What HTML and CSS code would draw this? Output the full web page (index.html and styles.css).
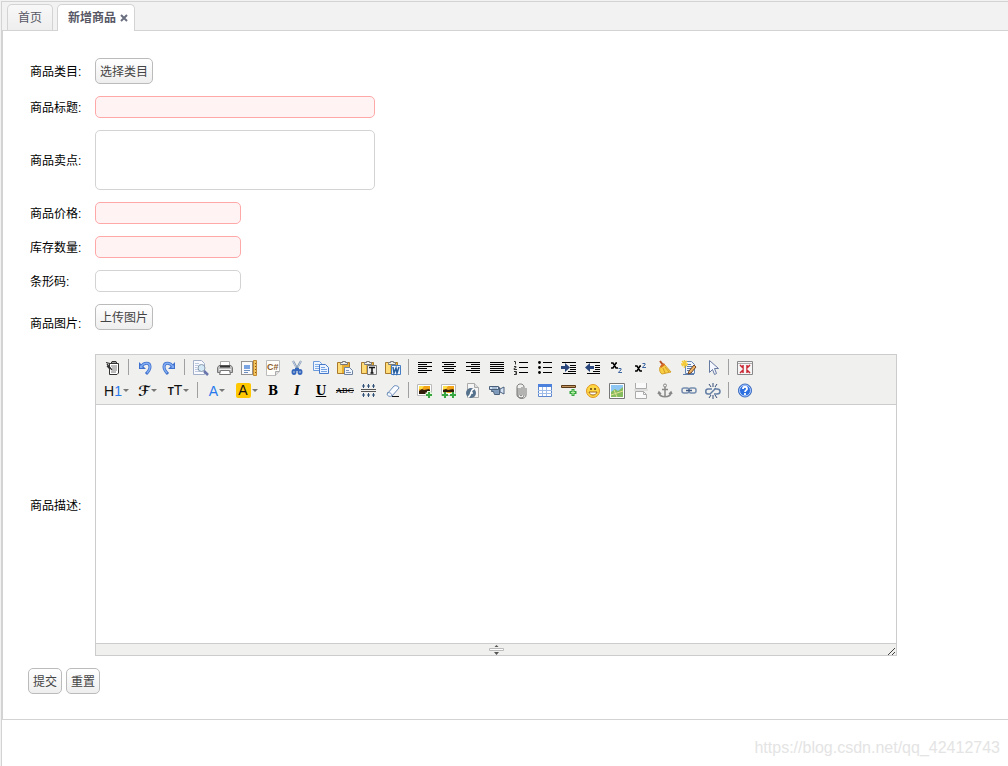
FILE: index.html
```html
<!DOCTYPE html>
<html lang="zh-CN">
<head>
<meta charset="utf-8">
<meta name="viewport" content="width=device-width, initial-scale=1">
<title>新增商品</title>
<link rel="stylesheet" href="styles.css">
</head>
<body>
<div class="app">
  <nav class="tabs" aria-label="标签页">
    <a class="tab" href="#home">首页</a>
    <div class="tab tab-active"><a href="#add">新增商品</a><button class="tab-close" type="button" aria-label="关闭"><svg width="8" height="8" viewBox="0 0 8 8"><path d="M1 1l6 6M7 1L1 7" stroke="#6b7080" stroke-width="2"/></svg></button></div>
  </nav>
  <main class="panel">
    <form class="form">
      <span class="label">商品类目:</span>
      <div><button class="btn" type="button">选择类目</button></div>
      <label class="label" for="title">商品标题:</label>
      <input class="field field-long field-invalid" id="title" type="text">
      <label class="label" for="point">商品卖点:</label>
      <textarea class="field field-long field-area" id="point"></textarea>
      <label class="label" for="price">商品价格:</label>
      <input class="field field-invalid" id="price" type="text">
      <label class="label" for="num">库存数量:</label>
      <input class="field field-invalid" id="num" type="text">
      <label class="label" for="code">条形码:</label>
      <input class="field" id="code" type="text">
      <span class="label">商品图片:</span>
      <div class="upload"><button class="btn" type="button">上传图片</button></div>
      <label class="label" for="desc">商品描述:</label>
      <div class="editor">
        <div class="toolbar">
          <div class="tools">
            <button class="tool" type="button" aria-label="HTML代码"><svg viewBox="0 0 16 16"><path d="M4.500 3.500h9v9.500l-1.500 1.500h-7.500z" fill="#fff" stroke="#333"/><path d="M7 1.500h4l1 2H6z" fill="#999" stroke="#333"/><path d="M1 2.500l4 1M2 4l5 6M2 6l3 3" stroke="#333" stroke-width="1.200"/><path d="M6 6h6M7 8h5M7 10h5M6 12h5" stroke="#777"/></svg></button>
            <span class="sep"></span>
            <button class="tool" type="button" aria-label="后退"><svg viewBox="0 0 16 16"><path d="M4 7c3-5 9-5 9 0 0 3-2 5-4 7" fill="none" stroke="#3f70cd" stroke-width="3"/><path d="M2 2v7h7z" fill="#3f70cd"/><path d="M4 7c3-5 9-5 9 0 0 3-2 5-3 6" fill="none" stroke="#82adf2" stroke-width="1.500"/><path d="M3 5v3h3z" fill="#82adf2"/></svg></button>
            <button class="tool" type="button" aria-label="前进"><svg viewBox="0 0 16 16"><path d="M12 7C9 2 3 2 3 7c0 3 2 5 4 7" fill="none" stroke="#3f70cd" stroke-width="3"/><path d="M14 2v7H7z" fill="#3f70cd"/><path d="M12 7C9 2 3 2 3 7c0 3 2 5 3 6" fill="none" stroke="#82adf2" stroke-width="1.500"/><path d="M13 5v3h-3z" fill="#82adf2"/></svg></button>
            <span class="sep"></span>
            <button class="tool" type="button" aria-label="预览"><svg viewBox="0 0 16 16"><path d="M.5.5h8l3 3v11H.5z" fill="#f8faff" stroke="#a3afc9"/><path d="M2 3.500h4M2 5.500h3M2 7.500h2M2 9.500h3M2 11.500h5" stroke="#bcc8df"/><circle cx="8.500" cy="8" r="3.500" fill="#d3e9f5" stroke="#8798ab"/><path d="M11 11l4 4" stroke="#6874ac" stroke-width="2.500"/></svg></button>
            <button class="tool" type="button" aria-label="打印"><svg viewBox="0 0 16 16"><path d="M3.500 6v-4.500h9v4.500" fill="#fff" stroke="#aaa"/><path d="M2 5.500h12l1.500 2v5H.5v-5z" fill="#bbb" stroke="#777"/><path d="M3 6.500h10" stroke="#333" stroke-width="2"/><path d="M2 9.500h12" stroke="#eee"/><path d="M3.500 10.500h9l1 4h-11z" fill="#fff" stroke="#777"/></svg></button>
            <button class="tool" type="button" aria-label="模板"><svg viewBox="0 0 16 16"><path d="M.5 1.500h11v13H.5z" fill="#fafafa" stroke="#333" stroke-dasharray="1 1"/><path d="M3 5h6v4H3z" fill="#7ba4e2"/><path d="M3 10.500h6M3 12.500h4" stroke="#6e8fbe"/><path d="M12.500.5h3v15h-3z" fill="#f3c75e" stroke="#c28932"/><path d="M14 3.500h1M14 6.500h1M14 9.500h1M14 12.500h1" stroke="#8f5515"/></svg></button>
            <button class="tool" type="button" aria-label="插入程序代码"><svg viewBox="0 0 16 16"><path d="M1.500.5h13v11l-4 4h-9z" fill="#fffefa" stroke="#bbb"/><path d="M10.500 15.500v-4h4" fill="#ddd" stroke="#aaa"/><text x="2" y="10" class="code-mark">C#</text></svg></button>
            <button class="tool" type="button" aria-label="剪切"><svg viewBox="0 0 16 16"><path d="M4 1l5 9M12 1l-5 9" stroke="#7890b0" stroke-width="2"/><path d="M4 1l3 6M12 1L9 7" stroke="#c8d4e2"/><ellipse cx="5" cy="12" rx="1.500" ry="2" fill="none" stroke="#3568bd" stroke-width="2"/><ellipse cx="11" cy="12" rx="1.500" ry="2" fill="none" stroke="#3568bd" stroke-width="2"/><path d="M6 8h4v3H6z" fill="#3568bd"/></svg></button>
            <button class="tool" type="button" aria-label="复制"><svg viewBox="0 0 16 16"><path d="M.5 1.500h6l2 2v7h-8z" fill="#eef5ff" stroke="#6c9add"/><path d="M2 4.500h4M2 6.500h4M2 8.500h4" stroke="#82aee9"/><path d="M6.500 4.500h6l3 3v6h-9z" fill="#eaf3ff" stroke="#4679c9"/><path d="M8 7.500h4M8 9.500h6M8 11.500h6" stroke="#75a2e5"/></svg></button>
            <button class="tool" type="button" aria-label="粘贴"><svg viewBox="0 0 16 16"><path d="M.5 2.500h12v11h-12z" fill="#e9ae31" stroke="#a9792d"/><path d="M1 3h4v10H1z" fill="#ffdc77"/><path d="M3.500 3.500v-1h2v-1h3v1h2v2h-7z" fill="#eee" stroke="#777"/><path d="M7.500 7.500h5l3 3v4h-8z" fill="#eef5ff" stroke="#71849f"/><path d="M9 10.500h3M9 12.500h5" stroke="#7e95b8"/></svg></button>
            <button class="tool" type="button" aria-label="粘贴为无格式文本"><svg viewBox="0 0 16 16"><path d="M.5 2.500h12v11h-12z" fill="#e9ae31" stroke="#a9792d"/><path d="M1 3h4v10H1z" fill="#ffdc77"/><path d="M3.500 3.500v-1h2v-1h3v1h2v2h-7z" fill="#eee" stroke="#777"/><path d="M6.500 5.500h9v9h-9z" fill="#eee" stroke="#777"/><path d="M8 7.500h6M11 7v6M9.500 13h3" stroke="#111" stroke-width="1.500"/></svg></button>
            <button class="tool" type="button" aria-label="从Word粘贴"><svg viewBox="0 0 16 16"><path d="M.5 2.500h12v11h-12z" fill="#e9ae31" stroke="#a9792d"/><path d="M1 3h4v10H1z" fill="#ffdc77"/><path d="M3.500 3.500v-1h2v-1h3v1h2v2h-7z" fill="#eee" stroke="#777"/><path d="M6.500 5.500h9v9h-9z" fill="#e9f2ff" stroke="#457dc4"/><path d="M8 7l1 6 2-5 1 5 2-6" fill="none" stroke="#285d9e" stroke-width="1.500"/></svg></button>
            <span class="sep"></span>
            <button class="tool" type="button" aria-label="左对齐"><svg viewBox="0 0 16 16"><path d="M1 2.500h14M1 4.500h9M1 6.500h14M1 8.500h9M1 10.500h14M1 12.500h9" stroke="#000"/></svg></button>
            <button class="tool" type="button" aria-label="居中"><svg viewBox="0 0 16 16"><path d="M1 2.500h14M3 4.500h10M1 6.500h14M3 8.500h10M1 10.500h14M3 12.500h10" stroke="#000"/></svg></button>
            <button class="tool" type="button" aria-label="右对齐"><svg viewBox="0 0 16 16"><path d="M1 2.500h14M6 4.500h9M1 6.500h14M6 8.500h9M1 10.500h14M6 12.500h9" stroke="#000"/></svg></button>
            <button class="tool" type="button" aria-label="两端对齐"><svg viewBox="0 0 16 16"><path d="M1 2.500h14M1 4.500h14M1 6.500h14M1 8.500h14M1 10.500h14M1 12.500h14" stroke="#000"/></svg></button>
            <button class="tool" type="button" aria-label="编号"><svg viewBox="0 0 16 16"><path d="M6 2.500h9M6 7.500h9M6 12.500h9" stroke="#000"/><path d="M1 1.500h1.500v3M1 6.500h2v1l-2 1v1h3M1 11.500h2.500v3H1M2 13h1" fill="none" stroke="#333"/></svg></button>
            <button class="tool" type="button" aria-label="项目符号"><svg viewBox="0 0 16 16"><path d="M6 2.500h9M6 7.500h9M6 12.500h9" stroke="#000"/><circle cx="2.500" cy="2.500" r="1.400"/><circle cx="2.500" cy="7.500" r="1.400"/><circle cx="2.500" cy="12.500" r="1.400"/></svg></button>
            <button class="tool" type="button" aria-label="增加缩进"><svg viewBox="0 0 16 16"><path d="M1 2.500h14M9 5.500h6M9 7.500h6M9 9.500h6M7 11.500h8M2 13.500h13" stroke="#000"/><path d="M0 6h4V3l5 4.500L4 12V9H0z" fill="#29467d"/></svg></button>
            <button class="tool" type="button" aria-label="减少缩进"><svg viewBox="0 0 16 16"><path d="M1 2.500h14M10 5.500h5M10 7.500h5M10 9.500h5M8 11.500h7M2 13.500h13" stroke="#000"/><path d="M9 6H5V3L0 7.500 5 12V9h4z" fill="#29467d"/></svg></button>
            <button class="tool" type="button" aria-label="下标"><svg viewBox="0 0 16 16"><path d="M2 3h2l3 5h2M8 3H7L4 8H2" fill="none" stroke="#000" stroke-width="1.500"/><path d="M9.500 8.500h2.500v1.500l-2.500 2v.5H13" fill="none" stroke="#3c65a1"/></svg></button>
            <button class="tool" type="button" aria-label="上标"><svg viewBox="0 0 16 16"><path d="M2 6h2l3 5h2M8 6H7l-3 5H2" fill="none" stroke="#000" stroke-width="1.500"/><path d="M9.500 3.500h2.500V5L9.500 7v.5H13" fill="none" stroke="#3c65a1"/></svg></button>
            <button class="tool" type="button" aria-label="清理HTML代码"><svg viewBox="0 0 16 16"><path d="M3 1l3 4" stroke="#b75124" stroke-width="2"/><path d="M3 7l4-3 7 8-9 2c-2-1-3-4-2-7z" fill="#f8cf42" stroke="#d4a12d"/><path d="M3 6l4-3 1 2-4 3z" fill="#d66b25"/><path d="M6 8l2 5M8 7l4 5" stroke="#d39a26"/></svg></button>
            <button class="tool" type="button" aria-label="一键排版"><svg viewBox="0 0 16 16"><path d="M4.500 1.500h6l3 3v9h-9z" fill="#eef5ff" stroke="#6585b7"/><path d="M6 4.500h4M6 6.500h6M6 8.500h6M6 10.500h5M2 14.500h11" stroke="#5b7cad"/><path d="M3.500 0v8M0 4h7M1 1l5 5M6 1L1 6" stroke="#f6cb39" stroke-width="1.500"/><path d="M15 7l-5 6-3 1 1-3 5-6z" fill="#eeb464" stroke="#714628"/></svg></button>
            <button class="tool" type="button" aria-label="全选"><svg viewBox="0 0 16 16"><path d="M4.500.5v12l3-3 2 5 2-1-2-5h4z" fill="#f5f8ff" stroke="#6679a0"/></svg></button>
            <span class="sep"></span>
            <button class="tool" type="button" aria-label="全屏显示"><svg viewBox="0 0 16 16"><path d="M.5 1.500h15v13H.5z" fill="#f6f6f6" stroke="#888"/><path d="M1 3.500h14" stroke="#aaa"/><path d="M3 5l3 3V5M13 5l-3 3V5M3 13l3-3v3M13 13l-3-3v3" fill="none" stroke="#c92833" stroke-width="1.500"/></svg></button>
          </div>
          <div class="tools">
            <button class="tool tool-menu" type="button" aria-label="段落"><span>H<b class="blue">1</b></span><i class="caret"></i></button>
            <button class="tool tool-menu" type="button" aria-label="字体"><span class="script">ℱ</span><i class="caret"></i></button>
            <button class="tool tool-menu" type="button" aria-label="文字大小"><span><small>T</small>T</span><i class="caret"></i></button>
            <span class="sep"></span>
            <div class="colors">
              <button class="tool tool-menu" type="button" aria-label="文字颜色"><span class="blue">A</span><i class="caret"></i></button>
              <button class="tool tool-menu" type="button" aria-label="文字背景"><span class="highlight">A</span><i class="caret"></i></button>
            </div>
            <button class="tool tool-serif" type="button" aria-label="粗体">B</button>
            <button class="tool tool-serif italic" type="button" aria-label="斜体">I</button>
            <button class="tool tool-serif underline" type="button" aria-label="下划线">U</button>
            <button class="tool strike" type="button" aria-label="删除线">ABC</button>
            <button class="tool" type="button" aria-label="行距"><svg viewBox="0 0 16 16"><path d="M0 6.500h15M0 8.500h15" stroke="#555"/><path d="M2.500 1v4M7.500 1v4M12.500 1v4M2.500 10v4M7.500 10v4M12.500 10v4M1 3h3M6 3h3M11 3h3M1 12h3M6 12h3M11 12h3" stroke="#315078"/></svg></button>
            <button class="tool" type="button" aria-label="删除格式"><svg viewBox="0 0 16 16"><path d="M2 11l7-8c1-1 5 0 5 2l-7 8c-2 1-5 0-5-2z" fill="#f8fbff" stroke="#6c8db8"/><path d="M2 10c2-1 5 0 5 3" fill="none" stroke="#6c8db8"/><path d="M7 13.500h7" stroke="#111"/></svg></button>
            <span class="sep"></span>
            <button class="tool" type="button" aria-label="图片"><svg viewBox="0 0 16 16"><path d="M.5 1.500h14v11H.5z" fill="#fff" stroke="#bbb"/><path d="M2 3h11v8H2z" fill="#f3a416"/><path d="M2 3h5l-2 3H2z" fill="#ffe14e"/><path d="M2 8l3-2 2 1 5-1 1 1v4H2z" fill="#301d09"/><path d="M12 8v7M8.500 11.500h7" stroke="#e6f6df" stroke-width="4"/><path d="M12 9v6M9 12h6" stroke="#37a641" stroke-width="2"/></svg></button>
            <button class="tool" type="button" aria-label="批量图片上传"><svg viewBox="0 0 16 16"><path d="M.5 1.500h14v11H.5z" fill="#fff" stroke="#bbb"/><path d="M2 3h11v7H2z" fill="#f3a416"/><path d="M2 3h5l-2 3H2z" fill="#ffe14e"/><path d="M2 7l3-1 2 1 5-1 1 1v2H2z" fill="#301d09"/><path d="M4 9v6M12 9v6M1 12h6M9 12h6" stroke="#e6f6df" stroke-width="3"/><path d="M4 9v6M1 12h6M12 9v6M9 12h6" stroke="#37a641" stroke-width="2"/></svg></button>
            <button class="tool" type="button" aria-label="Flash"><svg viewBox="0 0 16 16"><path d="M2.500.5h7l4 4v10h-11z" fill="#f5f5f5" stroke="#aaa"/><path d="M9.500.5v4h4" fill="#ddd" stroke="#aaa"/><circle cx="6" cy="10" r="5" fill="#56718c"/><path d="M9 6c-4 0-2 7-6 8M5 10h3" fill="none" stroke="#fff" stroke-width="1.500"/></svg></button>
            <button class="tool" type="button" aria-label="视音频"><svg viewBox="0 0 16 16"><path d="M3.500 4.500h7v7h-5l-1-3h-2z" fill="#839dbd" stroke="#4a607b"/><path d="M.5 3.500h9v3h-9zM11 6l4-2v7l-4-2z" fill="#d7e4f5" stroke="#4a607b"/><path d="M3 5h5M5 9h4" stroke="#7895b5"/></svg></button>
            <button class="tool" type="button" aria-label="插入文件"><svg viewBox="0 0 16 16"><path d="M5 5v7c0 4 6 4 6 0V4c0-4-7-4-7 0v8c0 4 9 5 9 0V5M7 5v7c0 1 2 1 2 0V4" fill="none" stroke="#777"/></svg></button>
            <button class="tool" type="button" aria-label="表格"><svg viewBox="0 0 16 16"><path d="M1.500 1.500h13v12h-13z" fill="#fff" stroke="#5e87ce"/><path d="M1 1h14v3H1z" fill="#4b80dc"/><path d="M5.500 4v9M9.500 4v9M1 7.500h14M1 10.500h14" stroke="#9ebbe9"/></svg></button>
            <button class="tool" type="button" aria-label="插入横线"><svg viewBox="0 0 16 16"><path d="M.5 2.500h14v2H.5z" fill="#c49461" stroke="#5a3b19"/><path d="M12 6v7M8.500 9.500h7" stroke="#37a641" stroke-width="3"/><path d="M12 7v5M10 9.500h4" stroke="#b8f1a4"/></svg></button>
            <button class="tool" type="button" aria-label="插入表情"><svg viewBox="0 0 16 16"><circle cx="8" cy="8" r="6.500" fill="#ffd743" stroke="#e09620"/><path d="M6 5v2M10 5v2" stroke="#604014" stroke-width="1.500"/><path d="M4 9h8c-1 4-7 4-8 0z" fill="#fff" stroke="#a36618"/></svg></button>
            <button class="tool" type="button" aria-label="地图"><svg viewBox="0 0 16 16"><path d="M.5.5h15v15H.5z" fill="#fff" stroke="#777"/><path d="M2 2h12v12H2z" fill="#8ec7f4"/><path d="M2 9l4-3 3 2 5-4v10H2z" fill="#85bd5e"/><path d="M2 12l12-4M5 7l3 7" stroke="#e5df91"/></svg></button>
            <button class="tool" type="button" aria-label="分页符"><svg viewBox="0 0 16 16"><path d="M2.500 0v5.500h11V0M2.500 15.500v-7h8l3 3v4z" fill="#fafafa" stroke="#aaa"/><path d="M10.500 8.500v3h3" fill="none" stroke="#aaa"/><path d="M1 7h14" stroke="#ccc"/></svg></button>
            <button class="tool" type="button" aria-label="锚点"><svg viewBox="0 0 16 16"><circle cx="8" cy="2.500" r="1.500" fill="none" stroke="#888"/><path d="M8 4v10M5 6.500h6M2 10c1 5 11 5 12 0M1 11l1-2 2 2M15 11l-1-2-2 2" fill="none" stroke="#888" stroke-width="1.500"/></svg></button>
            <button class="tool" type="button" aria-label="超级链接"><svg viewBox="0 0 16 16"><rect x="1" y="5" width="7" height="5" rx="2" fill="none" stroke="#758daf" stroke-width="1.500"/><rect x="8" y="5" width="7" height="5" rx="2" fill="none" stroke="#758daf" stroke-width="1.500"/><path d="M5 7.500h6" stroke="#415b85" stroke-width="1.500"/></svg></button>
            <button class="tool" type="button" aria-label="取消超级链接"><svg viewBox="0 0 16 16"><path d="M7 6H3c-3 0-3 5 0 5h3M9 6h3c4 0 4 5 0 5H9M5 11l6-6" fill="none" stroke="#647fa6" stroke-width="1.500"/><path d="M8 0v4M4 1l2 3M12 1l-2 3M8 12v4M4 15l2-3M12 15l-2-3" stroke="#344d78"/></svg></button>
            <span class="sep"></span>
            <button class="tool" type="button" aria-label="关于"><svg viewBox="0 0 16 16"><circle cx="8" cy="7.500" r="6.500" fill="#2f70e0" stroke="#3868bd"/><circle cx="8" cy="7.500" r="5.500" fill="none" stroke="#b7d3ff"/><path d="M6 6c0-3 4-3 4 0 0 1-2 1.500-2 3M8 10v2" fill="none" stroke="#fff" stroke-width="1.800"/></svg></button>
          </div>
        </div>
        <textarea class="editor-area" id="desc"></textarea>
        <div class="statusbar">
          <svg class="grip" width="15" height="11" viewBox="0 0 15 11"><path d="M7.500 1l2 2h-4zM5 8h5l-2.500 3z" fill="#555"/><path d="M.5 4.500h14v2H.5z" fill="#fff" stroke="#bbb"/></svg>
          <svg class="corner" width="8" height="8" viewBox="0 0 8 8"><path d="M0 8l7-7M4 8l3-3" stroke="#444"/></svg>
        </div>
      </div>
    </form>
    <div class="actions">
      <button class="btn" type="button">提交</button>
      <button class="btn" type="button">重置</button>
    </div>
  </main>
  <footer class="footer">https://blog.csdn.net/qq_42412743</footer>
</div>
</body>
</html>
```
FILE: styles.css
```css
* { box-sizing: border-box; }
body {
  margin: 0;
  padding: 1px 0 0 1px;
  background: #f2f2f2;
  color: #000;
  font: 12px/16px "Liberation Sans", "Noto Sans CJK SC", sans-serif;
}
button, input, textarea { font: inherit; margin: 0; }
.app {
  min-height: calc(100vh - 1px);
  border: solid #d3d3d3;
  border-width: 1px 0 0 1px;
  background: #fff;
}
.tabs {
  display: flex;
  gap: 4px;
  height: 29px;
  padding: 2px 5px 0;
  border-bottom: 1px solid #d3d3d3;
  background: #f2f2f2;
}
.tab {
  height: 26px;
  padding: 4px 10px;
  border: 1px solid #d3d3d3;
  border-bottom: 0;
  border-radius: 5px 5px 0 0;
  background: linear-gradient(#f8f8f8, #eee);
  color: #575765;
  line-height: 18px;
  text-decoration: none;
}
.tab a { color: inherit; text-decoration: none; }
.tab-active {
  display: flex;
  align-items: center;
  gap: 4px;
  height: 27px;
  padding-right: 6px;
  background: #fff;
  font-weight: bold;
}
.tab-close {
  display: flex;
  padding: 0;
  border: 0;
  background: none;
}
.panel {
  padding: 27px 25px 25px;
  border: solid #d3d3d3;
  border-width: 0 0 1px 1px;
}
.form {
  display: grid;
  grid-template-columns: 53px minmax(0, 802px);
  gap: 12px;
  align-items: center;
  padding-left: 2px;
}
.label { padding-top: 2px; white-space: nowrap; }
.btn {
  height: 26px;
  padding: 2px 4px 0;
  border: 1px solid #bbb;
  border-radius: 5px;
  background: linear-gradient(#fff, #eee);
  color: #444;
  vertical-align: top;
}
.field {
  width: 146px;
  height: 22px;
  padding: 2px 4px;
  border: 1px solid #d3d3d3;
  border-radius: 5px;
  background: #fff;
  outline: none;
}
.field-long { width: 280px; }
.field-area { display: block; height: 60px; resize: none; }
.field-invalid { border-color: #ffa8a8; background: #fff3f3; }
.upload { height: 38px; }
.editor { border: 1px solid #ccc; background: #fff; }
.toolbar {
  padding: 1px 5px 2px;
  border-bottom: 1px solid #ccc;
  background: #f0f0ee;
}
.tools { display: flex; flex-wrap: wrap; min-height: 23px; }
.tool {
  display: flex;
  align-items: center;
  justify-content: center;
  width: 24px;
  height: 23px;
  padding: 0;
  border: 0;
  background: none;
  color: #111;
}
.tool svg { width: 16px; height: 16px; }
.tool-menu { gap: 1px; width: 31px; font-size: 14px; white-space: nowrap; }
.tool-menu small { font-size: 10px; font-weight: bold; }
.colors { display: grid; grid-template-columns: 30px 29px; }
.colors .tool { width: auto; }
.script { font: bold 14px/16px "DejaVu Sans", sans-serif; }
.blue { color: #2878ed; font-weight: normal; }
.highlight {
  width: 15px;
  border-radius: 2px;
  background: #ffc800;
  line-height: 15px;
}
.caret {
  border: solid transparent;
  border-width: 3px 3px 0;
  border-top-color: #777;
}
.tool-serif { color: #000; font: bold 12px/16px "DejaVu Serif", serif; }
.italic { font-style: italic; }
.underline { text-decoration: underline; }
.strike {
  color: #000;
  font: 8px/16px "DejaVu Serif", serif;
  text-decoration: line-through;
}
.code-mark { font: bold 9px "Liberation Sans", sans-serif; fill: #8a5a28; }
.sep {
  width: 1px;
  height: 16px;
  margin: 3px 4px 0 3px;
  background: #a0a0a0;
}
.editor-area {
  display: block;
  width: 100%;
  height: 238px;
  padding: 5px;
  border: 0;
  outline: none;
  resize: none;
}
.statusbar {
  display: grid;
  grid-template-columns: 1fr auto 1fr;
  height: 12px;
  border-top: 1px solid #ccc;
  background: #f0f0ee;
}
.grip { grid-column: 2; }
.corner { justify-self: end; align-self: end; }
.actions { display: flex; gap: 4px; margin-top: 12px; }
.footer {
  padding: 19px 8px 0;
  color: #e4e4e4;
  font-size: 16px;
  line-height: 18px;
  text-align: right;
}
```
